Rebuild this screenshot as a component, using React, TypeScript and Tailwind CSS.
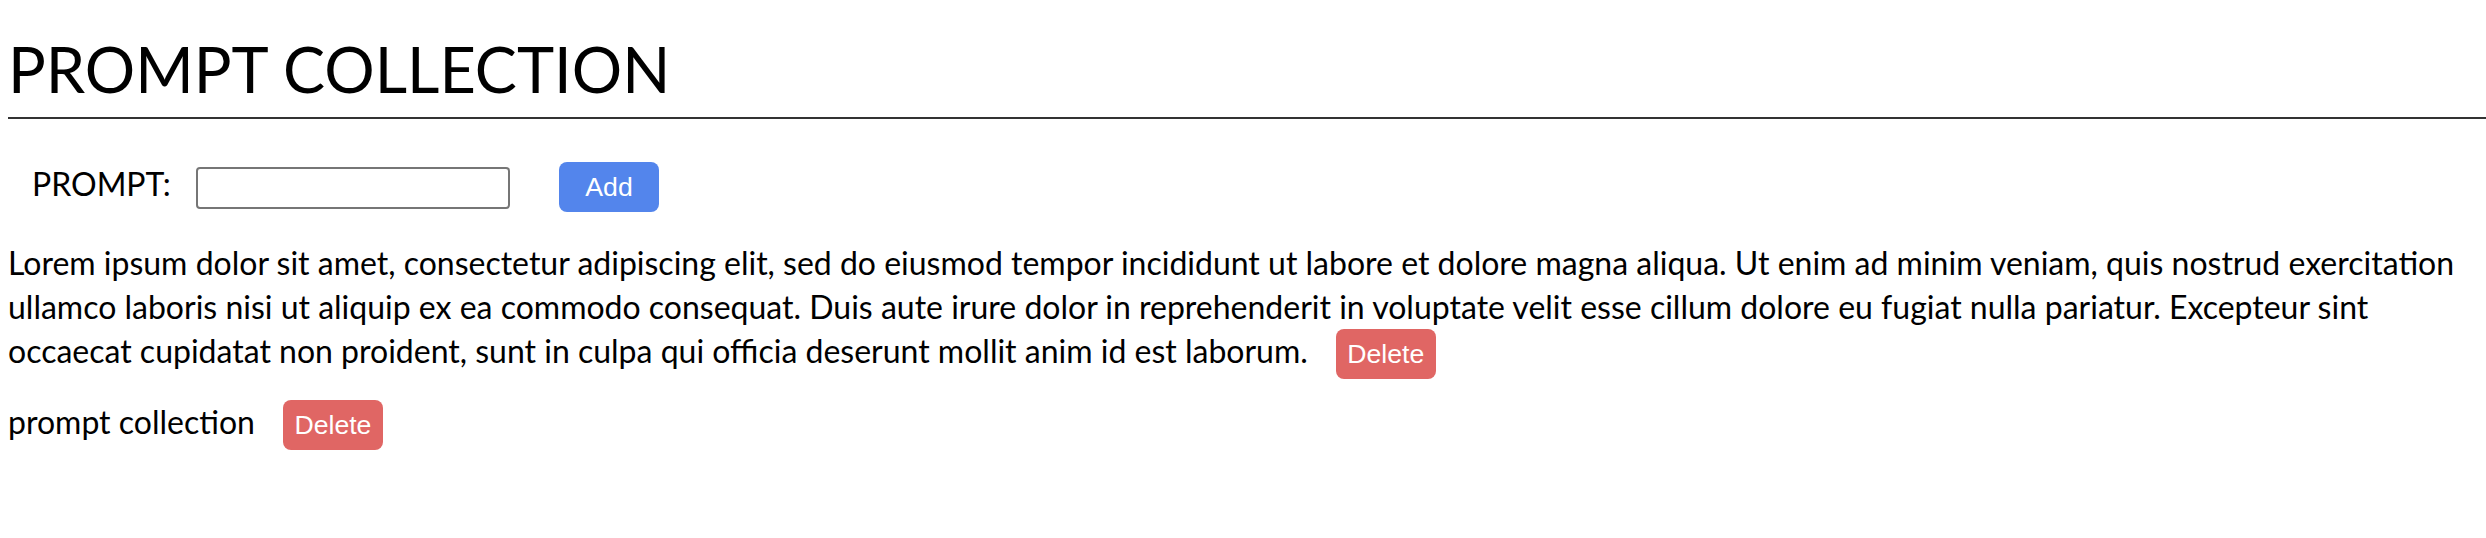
import { useState } from 'react'

const LOREM =
  'Lorem ipsum dolor sit amet, consectetur adipiscing elit, sed do eiusmod tempor incididunt ut labore et dolore magna aliqua. Ut enim ad minim veniam, quis nostrud exercitation ullamco laboris nisi ut aliquip ex ea commodo consequat. Duis aute irure dolor in reprehenderit in voluptate velit esse cillum dolore eu fugiat nulla pariatur. Excepteur sint occaecat cupidatat non proident, sunt in culpa qui officia deserunt mollit anim id est laborum.'

export default function App() {
  const [prompts, setPrompts] = useState<string[]>([LOREM, 'prompt collection'])
  const [draft, setDraft] = useState('')

  const addPrompt = (e: React.FormEvent) => {
    e.preventDefault()
    if (!draft.trim()) return
    setPrompts([...prompts, draft.trim()])
    setDraft('')
  }

  const removePrompt = (index: number) => {
    setPrompts(prompts.filter((_, i) => i !== index))
  }

  return (
    <div className="min-h-screen bg-white pt-[37px] pl-[8px] text-black font-['Lato','Noto_Sans',sans-serif]">
      <h1 className="text-[63px] leading-[64px] font-normal">PROMPT COLLECTION</h1>
      <hr className="mt-[16px] h-[2px] border-0 bg-[#333333]" />

      {/* Add form */}
      <form onSubmit={addPrompt} className="mt-[43px] pl-[24px] flex items-baseline">
        <label htmlFor="prompt" className="w-[164px] text-[32px] leading-[44px]">
          PROMPT:
        </label>
        <input
          id="prompt"
          value={draft}
          onChange={(e) => setDraft(e.target.value)}
          className="w-[314px] h-[42px] px-[4px] border-2 border-[#767676] rounded-[4px] text-[26.67px] font-['Liberation_Sans',Arial,sans-serif] outline-none"
        />
        <button
          type="submit"
          className="ml-[49px] w-[100px] h-[50px] rounded-[8px] bg-[#5385ec] text-white text-[26.67px] leading-[50px] font-['Liberation_Sans',Arial,sans-serif]"
        >
          Add
        </button>
      </form>

      {/* Prompt list */}
      <div className="mt-[29px] pr-[8px] text-[32px] leading-[44px]">
        {prompts.map((prompt, index) => (
          <p key={index} className={index === 0 ? '' : 'mt-[21px]'}>
            {prompt}
            <button
              onClick={() => removePrompt(index)}
              className="ml-[28px] inline-block align-baseline w-[100px] h-[50px] rounded-[8px] bg-[#e06664] text-white text-[26.67px] leading-[50px] font-['Liberation_Sans',Arial,sans-serif]"
            >
              Delete
            </button>
          </p>
        ))}
      </div>
    </div>
  )
}
